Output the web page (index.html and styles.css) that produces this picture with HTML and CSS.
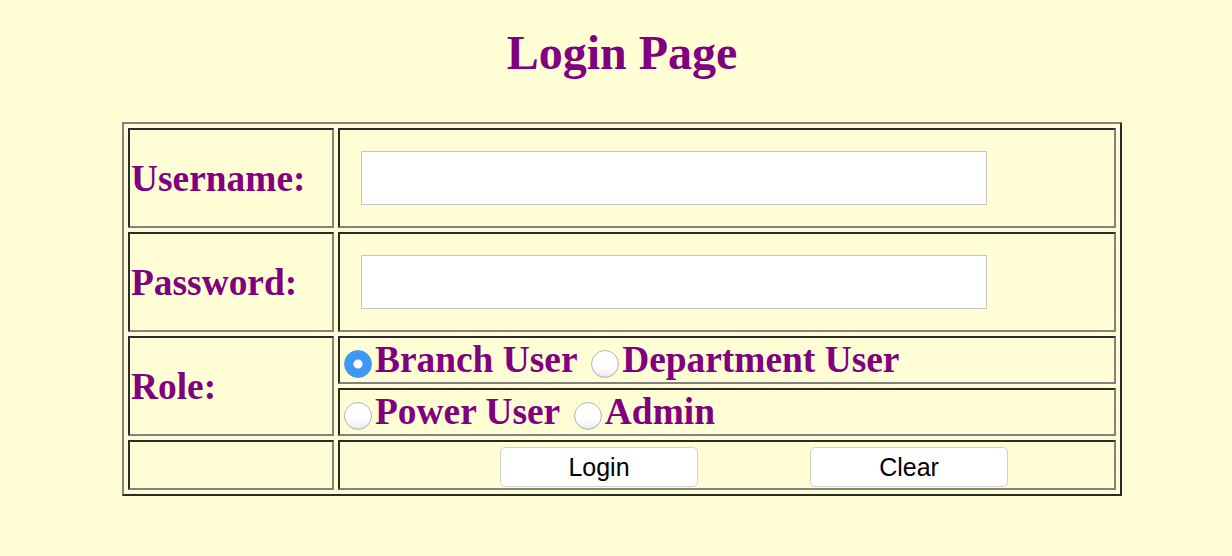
FILE: index.html
```html
<!DOCTYPE html>
<html>
<head>
<meta charset="utf-8">
<title>Login Page</title>
<link rel="stylesheet" href="styles.css">
</head>
<body>
<div class="page">
  <h1 class="title">Login Page</h1>
  <table class="login">
    <tr>
      <td class="label">Username:</td>
      <td class="field"><input class="text-input" type="text"></td>
    </tr>
    <tr>
      <td class="label">Password:</td>
      <td class="field"><input class="text-input" type="password"></td>
    </tr>
    <tr>
      <td class="label" rowspan="2">Role:</td>
      <td class="roles"><input class="radio" type="radio" name="role" checked>Branch User <input class="radio radio-next" type="radio" name="role">Department User</td>
    </tr>
    <tr>
      <td class="roles"><input class="radio" type="radio" name="role">Power User <input class="radio radio-next" type="radio" name="role">Admin</td>
    </tr>
    <tr>
      <td class="empty"></td>
      <td class="actions"><div class="buttons"><button class="btn" type="button">Login</button><button class="btn" type="button">Clear</button></div></td>
    </tr>
  </table>
</div>
</body>
</html>
```
FILE: styles.css
```css
html, body {
  margin: 0;
  padding: 0;
  background: #fffed4;
}
body {
  font-family: "Liberation Serif", "Times New Roman", serif;
  color: #800080;
}
.page {
  width: 1000px;
  margin-left: 122px;
  padding-top: 26px;
}
.title {
  margin: 0;
  font-size: 48px;
  font-weight: bold;
  line-height: 53px;
  text-align: center;
}
.login {
  margin-top: 43px;
  width: 1000px;
  border-collapse: separate;
  border-spacing: 4px;
  border: 2px solid;
  border-color: #808080 #2b2b2b #2b2b2b #808080;
  table-layout: fixed;
}
.login td {
  border: 2px solid;
  border-color: #2b2b2b #808080 #808080 #2b2b2b;
  padding: 1px;
  font-size: 37.4px;
  font-weight: bold;
  vertical-align: middle;
  white-space: nowrap;
}
.label {
  width: 200px;
}
.text-input {
  display: block;
  box-sizing: border-box;
  width: 626px;
  height: 54px;
  margin: 20px;
  border: 1px solid #c4c4c4;
  background: #ffffff;
  padding: 0 6px;
  font-size: 20px;
}
.roles {
  height: 42px;
  line-height: 42px;
}
.radio {
  appearance: none;
  -webkit-appearance: none;
  box-sizing: border-box;
  width: 28px;
  height: 28px;
  margin: 0 3px 0 3px;
  border: 1px solid #b4b4b4;
  border-radius: 50%;
  background: linear-gradient(#ffffff 0%, #ffffff 60%, #ececec 100%);
  box-shadow: inset 0 -1px 1px rgba(0,0,0,0.08);
  vertical-align: -6px;
}
.radio-next {
  margin-left: 5px;
}
.radio:checked {
  border-color: #3d99f5;
  background: radial-gradient(circle, #ffffff 0, #ffffff 4px, #3d99f5 5px);
  box-shadow: none;
}
.actions {
  height: 44px;
}
.buttons {
  display: flex;
  gap: 112px;
  padding: 4px 0 0 159px;
  height: 40px;
}
.btn {
  box-sizing: border-box;
  width: 198px;
  height: 40px;
  margin: 0;
  border: 1px solid #d2d2c8;
  border-radius: 5px;
  background: #ffffff;
  font-family: "Liberation Sans", Arial, sans-serif;
  font-size: 25px;
  color: #000000;
  padding: 0;
}
```
